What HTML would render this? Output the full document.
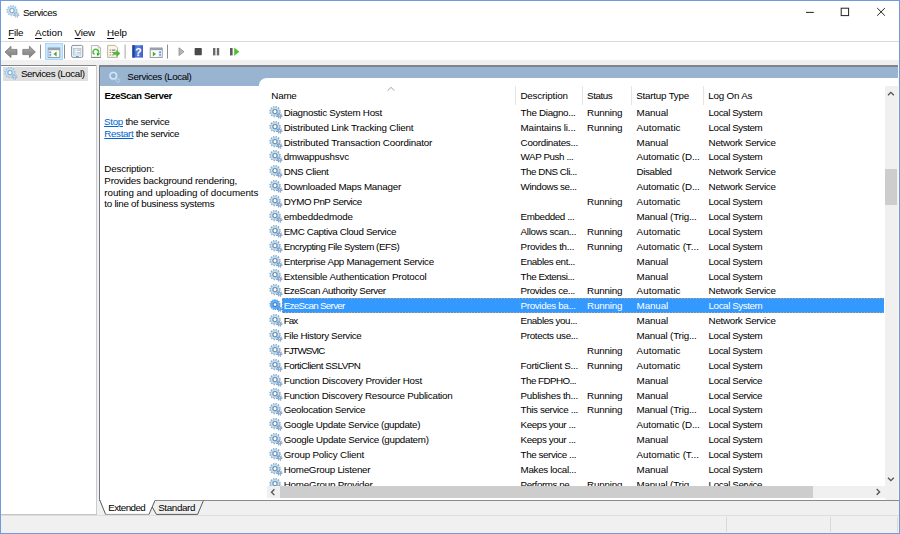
<!DOCTYPE html>
<html><head><meta charset="utf-8"><title>Services</title>
<style>
*{box-sizing:border-box;margin:0;padding:0}
html,body{width:900px;height:534px;overflow:hidden}
body{position:relative;background:#f0f0f0;font-family:"Liberation Sans",sans-serif;font-size:9.8px;color:#000;}
.abs{position:absolute}
#frame{position:absolute;left:0;top:0;width:900px;height:534px;border:1px solid #6f9bdc;z-index:50;pointer-events:none}
#top{position:absolute;left:1px;top:1px;width:898px;height:58.5px;background:#fff}
#msep{position:absolute;left:1px;top:40.6px;width:898px;height:1.3px;background:#d9d9de}
.t{position:absolute;white-space:nowrap;line-height:14px;height:14px}
.u{text-decoration:underline;text-underline-offset:1.5px}
#tree{position:absolute;left:1px;top:65px;width:95.6px;height:449.6px;background:#fff;}
.topline{position:absolute;height:1.5px;background:#80858b}
#treesel{position:absolute;left:3.1px;top:66.9px;width:84.6px;height:13.9px;background:#dfdfdf}
#main{position:absolute;left:99.1px;top:65.1px;width:799.9px;height:435.8px;background:#fff;border-left:1.5px solid #73777f;border-bottom:1.2px solid #8a8a8c}
#cap{position:absolute;left:100.4px;top:65.5px;width:797.2px;height:20.2px;background:#99b4d1}
#listbg{position:absolute;left:258.6px;top:78.2px;width:639.2px;height:421.4px;background:#fff;border-top-left-radius:8px 7px}
.hd{position:absolute;top:89.2px}
.vs{position:absolute;top:86px;width:1px;height:18.5px;background:#e5e5e5}
.row{position:absolute;left:262px;width:622px;height:14.9px;}
.row.sel::before{content:"";position:absolute;left:20.1px;top:-0.1px;right:0;height:14.9px;background:linear-gradient(90deg,#dca266 50%,transparent 50%) 0 0/3px 1px repeat-x,linear-gradient(90deg,#dca266 50%,transparent 50%) 0 100%/3px 1px repeat-x,linear-gradient(180deg,#dca266 50%,transparent 50%) 0 0/1px 3px repeat-y,#3399ff}
.row.sel .c{color:#fff}
.gi{position:absolute;left:6px;top:0.2px;width:14px;height:14px;overflow:visible}
.c{position:absolute;top:1.3px;white-space:nowrap;line-height:14px;height:14px}
.c1{left:21.7px}.c2{left:258.6px}.c3{left:325px}.c4{left:374.6px}.c5{left:446.6px}
#vscroll{position:absolute;left:885.1px;top:86px;width:12.5px;height:413.7px;background:#f0f0f0}
#vthumb{position:absolute;left:885.1px;top:169.2px;width:12.2px;height:36px;background:#cdcdcd}
#hscroll{position:absolute;left:266.8px;top:486px;width:618.4px;height:12px;background:#f0f0f0}
#hthumb{position:absolute;left:280px;top:486.2px;width:533px;height:11.8px;background:#cdcdcd}
#clip{position:absolute;left:0;top:0;width:900px;height:486px;overflow:hidden}
.link{color:#0066cc;text-decoration:underline;text-underline-offset:1px}
.sb{position:absolute;top:517.4px;width:1px;height:15px;background:#d9d9d9}
</style></head><body>
<svg width="0" height="0" style="position:absolute">
<defs>
<g id="gear">
 <circle cx="7" cy="6.6" r="4.85" fill="none" stroke="#7f9ec2" stroke-width="1.6" stroke-dasharray="1.25 1.29" />
 <circle cx="7" cy="6.6" r="3.5" fill="none" stroke="#9dc0dd" stroke-width="2.4"/>
 <circle cx="7" cy="6.6" r="3.45" fill="none" stroke="#bde3f5" stroke-width="1.2"/>
 <circle cx="7" cy="6.6" r="2.05" fill="#fff" stroke="#7189a8" stroke-width="1.05"/>
 <circle cx="11.5" cy="10.8" r="2.25" fill="none" stroke="#7395bd" stroke-width="1.3" stroke-dasharray="1.0 0.77"/>
 <circle cx="11.5" cy="10.8" r="1.25" fill="#cfe2f1" stroke="#86a9cf" stroke-width="1.1"/>
</g>
<g id="gearlt">
 <circle cx="7" cy="6.6" r="4.85" fill="none" stroke="#9dbcda" stroke-width="1.6" stroke-dasharray="1.25 1.29" />
 <circle cx="7" cy="6.6" r="3.5" fill="none" stroke="#a9cde8" stroke-width="2.4"/>
 <circle cx="7" cy="6.6" r="3.45" fill="none" stroke="#c1e5f6" stroke-width="1.2"/>
 <circle cx="7" cy="6.6" r="2.05" fill="#fff" stroke="#8da6c2" stroke-width="1.05"/>
 <circle cx="11.5" cy="10.8" r="2.25" fill="none" stroke="#93b3d4" stroke-width="1.3" stroke-dasharray="1.0 0.77"/>
 <circle cx="11.5" cy="10.8" r="1.25" fill="#d7e8f4" stroke="#a1c0de" stroke-width="1.1"/>
</g>
<g id="gearsel">
 <circle cx="7" cy="6.6" r="4.75" fill="none" stroke="#3f8be0" stroke-width="1.5" stroke-dasharray="1.05 1.08" />
 <circle cx="7" cy="6.6" r="3.45" fill="none" stroke="#62b1f6" stroke-width="2.3"/>
 <circle cx="7" cy="6.6" r="4.4" fill="none" stroke="#4a98ea" stroke-width="0.5"/>
 <circle cx="7" cy="6.6" r="2.0" fill="#fff" stroke="#3a80d2" stroke-width="1.15"/>
 <circle cx="11.5" cy="10.9" r="2.2" fill="none" stroke="#3a82d6" stroke-width="1.2" stroke-dasharray="0.95 0.78"/>
 <circle cx="11.5" cy="10.9" r="1.3" fill="#8cc4f7" stroke="#4e9cec" stroke-width="1.1"/>
</g>
</defs></svg>
<div id="top"></div><div id="msep"></div>

<!-- title bar -->
<svg class="abs" style="left:5.4px;top:3.9px;width:15px;height:15px;overflow:visible"><use href="#gearlt"/></svg>
<div id="a1" class="t" style="left:22.9px;top:6px;font-size:9.8px;letter-spacing:-0.485px">Services</div>
<svg class="abs" style="left:800px;top:4px;width:92px;height:16px" viewBox="0 0 92 16">
 <path d="M6 8.4H13.8" stroke="#222" stroke-width="1" fill="none"/>
 <rect x="41.2" y="4.2" width="7.4" height="7.4" stroke="#222" stroke-width="1" fill="none"/>
 <path d="M77.2 4L84.9 11.7M84.9 4L77.2 11.7" stroke="#222" stroke-width="1" fill="none"/>
</svg>
<!-- menu -->
<div id="a2" class="t" style="left:8.3px;top:26.1px;letter-spacing:-0.249px"><span class="u">F</span>ile</div>
<div id="a3" class="t" style="left:35.1px;top:26.1px;letter-spacing:0.025px"><span class="u">A</span>ction</div>
<div id="a4" class="t" style="left:74.6px;top:26.1px;letter-spacing:-0.166px"><span class="u">V</span>iew</div>
<div id="a5" class="t" style="left:107.1px;top:26.1px;letter-spacing:-0.064px"><span class="u">H</span>elp</div>
<!-- toolbar -->
<svg class="abs" style="left:0;top:42px;width:260px;height:18px" viewBox="0 42 260 18">
 <defs>
  <linearGradient id="ga" x1="0" y1="0" x2="0" y2="1"><stop offset="0" stop-color="#a9a9a9"/><stop offset="1" stop-color="#7d7d7d"/></linearGradient>
  <linearGradient id="gb" x1="0" y1="0" x2="1" y2="0"><stop offset="0" stop-color="#2a4bb0"/><stop offset="0.5" stop-color="#5b86e6"/><stop offset="1" stop-color="#3a5fc8"/></linearGradient>
 </defs>
 <!-- back / forward -->
 <path d="M5 52 L11 46.2 V49.4 H17 V54.6 H11 V57.6 Z" fill="url(#ga)" stroke="#6e6e6e" stroke-width="0.7"/>
 <path d="M35.4 52 L29.4 46.2 V49.4 H22.8 V54.6 H29.4 V57.6 Z" fill="url(#ga)" stroke="#6e6e6e" stroke-width="0.7"/>
 <rect x="40" y="44.6" width="1" height="14" fill="#8d8d8d"/>
 <!-- selected button -->
 <rect x="45.4" y="43.4" width="17.2" height="16" fill="#cce8ff" stroke="#99d1ff" stroke-width="0.8"/>
 <rect x="48.2" y="48" width="11.6" height="9.4" fill="#fff" stroke="#8c919a" stroke-width="0.9"/>
 <rect x="48.2" y="48" width="11.6" height="2.2" fill="#9aa0ab"/>
 <rect x="48.6" y="50.4" width="3.2" height="6.6" fill="#dbe6f5"/>
 <rect x="49.4" y="51.6" width="1.6" height="1.4" fill="#5b8fd8"/><rect x="49.4" y="54.2" width="1.6" height="1.4" fill="#5b8fd8"/>
 <path d="M53.4 54 L56.6 51.6 V56.4 Z" fill="#43b02a"/>
 <rect x="64" y="44.6" width="1" height="14" fill="#8d8d8d"/>
 <!-- properties -->
 <rect x="71.6" y="45.4" width="11.2" height="12" rx="1.4" fill="#f4f7fb" stroke="#8c919a" stroke-width="1"/>
 <rect x="73.6" y="48.6" width="7.2" height="6.4" fill="#fff" stroke="#aeb6c4" stroke-width="0.7"/>
 <rect x="73.8" y="49" width="2" height="5.6" fill="#bfe3f7"/>
 <rect x="76.6" y="49.6" width="3.6" height="1" fill="#9aa3b3"/><rect x="76.6" y="52.4" width="3.6" height="1" fill="#9aa3b3"/>
 <rect x="76" y="56" width="2.6" height="1.2" fill="#39a8e8"/>
 <!-- refresh -->
 <path d="M91.4 45.6 H98.2 L100.6 48 V57.3 H91.4 Z" fill="#fdfdfd" stroke="#a3a3a3" stroke-width="0.8"/>
 <path d="M98.2 45.6 V48 H100.6" fill="none" stroke="#a8a8a8" stroke-width="0.6"/>
 <path d="M91.2 57.5 H100.8" stroke="#7a7a7a" stroke-width="0.8"/>
 <path d="M94.6 54.3 A2.65 2.65 0 1 1 98.2 53.0" fill="none" stroke="#4fc038" stroke-width="1.5"/>
 <path d="M96.6 53.0 L100.2 53.4 L97.6 56.2 Z" fill="#22ad1c"/>
 <!-- export -->
 <path d="M107.6 45.4 H115.2 L117.6 47.8 V57.4 H107.6 Z" fill="#fbf6dd" stroke="#a9a595" stroke-width="0.8"/>
 <rect x="109.6" y="49.6" width="1.6" height="1" fill="#7a7f99"/><rect x="112" y="49.6" width="3.4" height="1" fill="#5c6499"/>
 <rect x="109.6" y="52" width="1.6" height="1" fill="#9a9a9a"/><rect x="112" y="52" width="2.4" height="1" fill="#9a9a9a"/>
 <rect x="109.6" y="54.4" width="1.6" height="1" fill="#9a9a9a"/><rect x="112" y="54.4" width="2" height="1" fill="#9a9a9a"/>
 <path d="M113.6 52.2 H116.6 V50.4 L120 53.4 L116.6 56.4 V54.6 H113.6 Z" fill="#45b82f" stroke="#3a9c27" stroke-width="0.4"/>
 <rect x="124.6" y="44.6" width="1" height="14" fill="#a5a5a5"/>
 <!-- help -->
 <rect x="132.4" y="45.2" width="10.6" height="12.4" fill="url(#gb)"/>
 <rect x="132.4" y="45.2" width="2" height="12.4" fill="#23409c"/>
 <text x="138.3" y="55.6" font-family="Liberation Sans, sans-serif" font-weight="bold" font-size="11" fill="#fff" text-anchor="middle">?</text>
 <!-- window icon -->
 <rect x="150.2" y="48" width="12" height="9.4" fill="#fff" stroke="#8c919a" stroke-width="0.9"/>
 <rect x="150.2" y="48" width="12" height="2.2" fill="#9aa0ab"/>
 <rect x="158.4" y="50.4" width="3.4" height="6.6" fill="#dbe6f5"/>
 <rect x="159.2" y="51.6" width="1.8" height="1.4" fill="#5b8fd8"/><rect x="159.2" y="54.2" width="1.8" height="1.4" fill="#5b8fd8"/>
 <path d="M156 54 L152.8 51.6 V56.4 Z" fill="#43b02a"/>
 <rect x="167" y="44.6" width="1" height="14" fill="#8d8d8d"/>
 <!-- play stop pause resume -->
 <path d="M179 47.8 L184 51.7 L179 55.6 Z" fill="#b8b8b8" stroke="#8a8a8a" stroke-width="0.8"/>
 <rect x="194.6" y="48" width="7.2" height="7.2" rx="0.8" fill="#4a4a4a"/>
 <rect x="213" y="48" width="2.4" height="7.4" fill="#6a6a6a"/><rect x="216.8" y="48" width="2.4" height="7.4" fill="#6a6a6a"/>
 <rect x="230" y="48" width="2.6" height="7.4" fill="#5a5a5a"/>
 <path d="M234.2 47.6 L239.4 51.7 L234.2 55.8 Z" fill="#4ec22f"/>
</svg>
<!-- tree pane -->
<div id="tree"></div>
<div class="topline" style="left:1px;top:64.8px;width:95.6px;height:1.3px"></div>
<div class="abs" style="left:95.5px;top:65px;width:1.3px;height:450px;background:#cbcbcb"></div>
<div class="abs" style="left:1px;top:514.1px;width:95.8px;height:1.1px;background:#c4c4c4"></div>
<div id="treesel"></div>
<svg class="abs" style="left:3px;top:66px;width:15px;height:15px;overflow:visible"><use href="#gearlt"/></svg>
<div id="a6" class="t" style="left:20.9px;top:66.9px;letter-spacing:-0.415px">Services (Local)</div>
<!-- main pane -->
<div id="main"></div>
<div id="cap"></div>
<div class="topline" style="left:99.1px;top:65.1px;width:798.7px"></div>
<div id="listbg"></div>
<div class="abs" style="left:897.6px;top:66.6px;width:1.4px;height:433px;background:#f7f7f7"></div>
<svg class="abs" style="left:106px;top:68px;width:16px;height:16px;overflow:visible" viewBox="106 68 16 16">
 <circle cx="113.3" cy="75.7" r="4.1" fill="none" stroke="#b3cde6" stroke-width="0.9" stroke-dasharray="0.9 0.94"/>
 <circle cx="113.3" cy="75.7" r="3.2" fill="#93afce" stroke="#cde7f6" stroke-width="1.5"/>
 <circle cx="118" cy="80.4" r="1.7" fill="none" stroke="#b9d4ea" stroke-width="0.9"/>
 <circle cx="118" cy="80.4" r="2.3" fill="none" stroke="#abc6e0" stroke-width="0.6" stroke-dasharray="0.7 0.75"/>
</svg>
<div id="a7" class="t" style="left:127.3px;top:70.1px;letter-spacing:-0.377px">Services (Local)</div>
<!-- extended info -->
<div id="a8" class="t" style="left:104.4px;top:89.4px;font-weight:bold;font-size:9.8px;letter-spacing:-0.431px">EzeScan Server</div>
<div id="a9" class="t" style="left:104.1px;top:115px;letter-spacing:-0.310px"><span class="link">Stop</span> the service</div>
<div id="a10" class="t" style="left:104.3px;top:126.6px;letter-spacing:-0.362px"><span class="link">Restart</span> the service</div>
<div id="a11" class="t" style="left:104.3px;top:162px;letter-spacing:-0.170px">Description:</div>
<div id="a12" class="t" style="left:104.3px;top:174px;letter-spacing:-0.202px">Provides background rendering,</div>
<div id="a13" class="t" style="left:104.3px;top:185.6px;letter-spacing:-0.052px">routing and uploading of documents</div>
<div id="a14" class="t" style="left:104.3px;top:197.4px;letter-spacing:-0.258px">to line of business systems</div>
<!-- list header -->
<div id="a15" class="t hd" style="left:271.3px;letter-spacing:-0.210px">Name</div>
<div id="a16" class="t hd" style="left:520.4px;letter-spacing:-0.147px">Description</div>
<div id="a17" class="t hd" style="left:587.1px;letter-spacing:-0.430px">Status</div>
<div id="a18" class="t hd" style="left:636.3px;letter-spacing:-0.223px">Startup Type</div>
<div id="a19" class="t hd" style="left:708.3px;letter-spacing:-0.196px">Log On As</div>
<div class="vs" style="left:515px"></div><div class="vs" style="left:581.6px"></div><div class="vs" style="left:631.2px"></div><div class="vs" style="left:703px"></div>
<svg class="abs" style="left:386px;top:86px;width:10px;height:6px" viewBox="0 0 10 6"><path d="M1.6 4.6 L5 1.4 L8.4 4.6" fill="none" stroke="#9a9a9a" stroke-width="0.9"/></svg>
<div id="clip">

<div class="row" style="top:104.56px"><svg class="gi"><use href="#gear"/></svg><span class="c c1" style="letter-spacing:-0.261px">Diagnostic System Host</span><span class="c c2" style="letter-spacing:-0.298px">The Diagno...</span><span class="c c3" style="letter-spacing:-0.164px">Running</span><span class="c c4" style="letter-spacing:-0.115px">Manual</span><span class="c c5" style="letter-spacing:-0.422px">Local System</span></div>
<div class="row" style="top:119.44px"><svg class="gi"><use href="#gear"/></svg><span class="c c1" style="letter-spacing:-0.169px">Distributed Link Tracking Client</span><span class="c c2" style="letter-spacing:-0.148px">Maintains li...</span><span class="c c3" style="letter-spacing:-0.164px">Running</span><span class="c c4" style="letter-spacing:0.043px">Automatic</span><span class="c c5" style="letter-spacing:-0.422px">Local System</span></div>
<div class="row" style="top:134.32px"><svg class="gi"><use href="#gear"/></svg><span class="c c1" style="letter-spacing:-0.159px">Distributed Transaction Coordinator</span><span class="c c2" style="letter-spacing:-0.268px">Coordinates...</span><span class="c c3"></span><span class="c c4" style="letter-spacing:-0.115px">Manual</span><span class="c c5" style="letter-spacing:-0.292px">Network Service</span></div>
<div class="row" style="top:149.20px"><svg class="gi"><use href="#gear"/></svg><span class="c c1" style="letter-spacing:-0.198px">dmwappushsvc</span><span class="c c2" style="letter-spacing:-0.414px">WAP Push ...</span><span class="c c3"></span><span class="c c4" style="letter-spacing:-0.110px">Automatic (D...</span><span class="c c5" style="letter-spacing:-0.422px">Local System</span></div>
<div class="row" style="top:164.08px"><svg class="gi"><use href="#gear"/></svg><span class="c c1" style="letter-spacing:-0.372px">DNS Client</span><span class="c c2" style="letter-spacing:-0.469px">The DNS Cli...</span><span class="c c3"></span><span class="c c4" style="letter-spacing:-0.384px">Disabled</span><span class="c c5" style="letter-spacing:-0.292px">Network Service</span></div>
<div class="row" style="top:178.96px"><svg class="gi"><use href="#gear"/></svg><span class="c c1" style="letter-spacing:-0.226px">Downloaded Maps Manager</span><span class="c c2" style="letter-spacing:-0.380px">Windows se...</span><span class="c c3"></span><span class="c c4" style="letter-spacing:-0.110px">Automatic (D...</span><span class="c c5" style="letter-spacing:-0.292px">Network Service</span></div>
<div class="row" style="top:193.84px"><svg class="gi"><use href="#gear"/></svg><span class="c c1" style="letter-spacing:-0.493px">DYMO PnP Service</span><span class="c c2"></span><span class="c c3" style="letter-spacing:-0.164px">Running</span><span class="c c4" style="letter-spacing:0.043px">Automatic</span><span class="c c5" style="letter-spacing:-0.422px">Local System</span></div>
<div class="row" style="top:208.72px"><svg class="gi"><use href="#gear"/></svg><span class="c c1" style="letter-spacing:-0.130px">embeddedmode</span><span class="c c2" style="letter-spacing:-0.386px">Embedded ...</span><span class="c c3"></span><span class="c c4" style="letter-spacing:-0.190px">Manual (Trig...</span><span class="c c5" style="letter-spacing:-0.422px">Local System</span></div>
<div class="row" style="top:223.60px"><svg class="gi"><use href="#gear"/></svg><span class="c c1" style="letter-spacing:-0.363px">EMC Captiva Cloud Service</span><span class="c c2" style="letter-spacing:-0.318px">Allows scan...</span><span class="c c3" style="letter-spacing:-0.164px">Running</span><span class="c c4" style="letter-spacing:0.043px">Automatic</span><span class="c c5" style="letter-spacing:-0.422px">Local System</span></div>
<div class="row" style="top:238.48px"><svg class="gi"><use href="#gear"/></svg><span class="c c1" style="letter-spacing:-0.455px">Encrypting File System (EFS)</span><span class="c c2" style="letter-spacing:-0.253px">Provides th...</span><span class="c c3" style="letter-spacing:-0.164px">Running</span><span class="c c4" style="letter-spacing:-0.024px">Automatic (T...</span><span class="c c5" style="letter-spacing:-0.422px">Local System</span></div>
<div class="row" style="top:253.36px"><svg class="gi"><use href="#gear"/></svg><span class="c c1" style="letter-spacing:-0.285px">Enterprise App Management Service</span><span class="c c2" style="letter-spacing:-0.398px">Enables ent...</span><span class="c c3"></span><span class="c c4" style="letter-spacing:-0.115px">Manual</span><span class="c c5" style="letter-spacing:-0.422px">Local System</span></div>
<div class="row" style="top:268.24px"><svg class="gi"><use href="#gear"/></svg><span class="c c1" style="letter-spacing:-0.153px">Extensible Authentication Protocol</span><span class="c c2" style="letter-spacing:-0.447px">The Extensi...</span><span class="c c3"></span><span class="c c4" style="letter-spacing:-0.115px">Manual</span><span class="c c5" style="letter-spacing:-0.422px">Local System</span></div>
<div class="row" style="top:283.12px"><svg class="gi"><use href="#gear"/></svg><span class="c c1" style="letter-spacing:-0.400px">EzeScan Authority Server</span><span class="c c2" style="letter-spacing:-0.358px">Provides ce...</span><span class="c c3" style="letter-spacing:-0.164px">Running</span><span class="c c4" style="letter-spacing:0.043px">Automatic</span><span class="c c5" style="letter-spacing:-0.292px">Network Service</span></div>
<div class="row sel" style="top:298.00px"><svg class="gi"><use href="#gearsel"/></svg><span class="c c1" style="letter-spacing:-0.703px">EzeScan Server</span><span class="c c2" style="letter-spacing:-0.354px">Provides ba...</span><span class="c c3" style="letter-spacing:-0.164px">Running</span><span class="c c4" style="letter-spacing:-0.115px">Manual</span><span class="c c5" style="letter-spacing:-0.422px">Local System</span></div>
<div class="row" style="top:312.88px"><svg class="gi"><use href="#gear"/></svg><span class="c c1" style="letter-spacing:-0.931px">Fax</span><span class="c c2" style="letter-spacing:-0.396px">Enables you...</span><span class="c c3"></span><span class="c c4" style="letter-spacing:-0.115px">Manual</span><span class="c c5" style="letter-spacing:-0.292px">Network Service</span></div>
<div class="row" style="top:327.76px"><svg class="gi"><use href="#gear"/></svg><span class="c c1" style="letter-spacing:-0.332px">File History Service</span><span class="c c2" style="letter-spacing:-0.358px">Protects use...</span><span class="c c3"></span><span class="c c4" style="letter-spacing:-0.190px">Manual (Trig...</span><span class="c c5" style="letter-spacing:-0.422px">Local System</span></div>
<div class="row" style="top:342.64px"><svg class="gi"><use href="#gear"/></svg><span class="c c1" style="letter-spacing:-1.042px">FJTWSVIC</span><span class="c c2"></span><span class="c c3" style="letter-spacing:-0.164px">Running</span><span class="c c4" style="letter-spacing:0.043px">Automatic</span><span class="c c5" style="letter-spacing:-0.422px">Local System</span></div>
<div class="row" style="top:357.52px"><svg class="gi"><use href="#gear"/></svg><span class="c c1" style="letter-spacing:-0.480px">FortiClient SSLVPN</span><span class="c c2" style="letter-spacing:-0.302px">FortiClient S...</span><span class="c c3" style="letter-spacing:-0.164px">Running</span><span class="c c4" style="letter-spacing:0.043px">Automatic</span><span class="c c5" style="letter-spacing:-0.422px">Local System</span></div>
<div class="row" style="top:372.40px"><svg class="gi"><use href="#gear"/></svg><span class="c c1" style="letter-spacing:-0.223px">Function Discovery Provider Host</span><span class="c c2" style="letter-spacing:-0.551px">The FDPHO...</span><span class="c c3"></span><span class="c c4" style="letter-spacing:-0.115px">Manual</span><span class="c c5" style="letter-spacing:-0.412px">Local Service</span></div>
<div class="row" style="top:387.28px"><svg class="gi"><use href="#gear"/></svg><span class="c c1" style="letter-spacing:-0.253px">Function Discovery Resource Publication</span><span class="c c2" style="letter-spacing:-0.286px">Publishes th...</span><span class="c c3" style="letter-spacing:-0.164px">Running</span><span class="c c4" style="letter-spacing:-0.115px">Manual</span><span class="c c5" style="letter-spacing:-0.412px">Local Service</span></div>
<div class="row" style="top:402.16px"><svg class="gi"><use href="#gear"/></svg><span class="c c1" style="letter-spacing:-0.323px">Geolocation Service</span><span class="c c2" style="letter-spacing:-0.369px">This service ...</span><span class="c c3" style="letter-spacing:-0.164px">Running</span><span class="c c4" style="letter-spacing:-0.190px">Manual (Trig...</span><span class="c c5" style="letter-spacing:-0.422px">Local System</span></div>
<div class="row" style="top:417.04px"><svg class="gi"><use href="#gear"/></svg><span class="c c1" style="letter-spacing:-0.307px">Google Update Service (gupdate)</span><span class="c c2" style="letter-spacing:-0.393px">Keeps your ...</span><span class="c c3"></span><span class="c c4" style="letter-spacing:-0.110px">Automatic (D...</span><span class="c c5" style="letter-spacing:-0.422px">Local System</span></div>
<div class="row" style="top:431.92px"><svg class="gi"><use href="#gear"/></svg><span class="c c1" style="letter-spacing:-0.287px">Google Update Service (gupdatem)</span><span class="c c2" style="letter-spacing:-0.393px">Keeps your ...</span><span class="c c3"></span><span class="c c4" style="letter-spacing:-0.115px">Manual</span><span class="c c5" style="letter-spacing:-0.422px">Local System</span></div>
<div class="row" style="top:446.80px"><svg class="gi"><use href="#gear"/></svg><span class="c c1" style="letter-spacing:-0.190px">Group Policy Client</span><span class="c c2" style="letter-spacing:-0.405px">The service ...</span><span class="c c3"></span><span class="c c4" style="letter-spacing:-0.024px">Automatic (T...</span><span class="c c5" style="letter-spacing:-0.422px">Local System</span></div>
<div class="row" style="top:461.68px"><svg class="gi"><use href="#gear"/></svg><span class="c c1" style="letter-spacing:-0.238px">HomeGroup Listener</span><span class="c c2" style="letter-spacing:-0.318px">Makes local...</span><span class="c c3"></span><span class="c c4" style="letter-spacing:-0.115px">Manual</span><span class="c c5" style="letter-spacing:-0.422px">Local System</span></div>
<div class="row" style="top:476.56px"><svg class="gi"><use href="#gear"/></svg><span class="c c1" style="letter-spacing:-0.207px">HomeGroup Provider</span><span class="c c2" style="letter-spacing:-0.413px">Performs ne...</span><span class="c c3" style="letter-spacing:-0.164px">Running</span><span class="c c4" style="letter-spacing:-0.190px">Manual (Trig...</span><span class="c c5" style="letter-spacing:-0.412px">Local Service</span></div>
</div>
<!-- scrollbars -->
<div id="vscroll"></div><div id="vthumb"></div>
<div id="hscroll"></div><div id="hthumb"></div>
<svg class="abs" style="left:884px;top:86px;width:14px;height:412px" viewBox="884 86 14 412">
 <path d="M888 95.2 L890.9 92.3 L893.8 95.2" fill="none" stroke="#505050" stroke-width="1.3"/>
 <path d="M888 477.8 L890.9 480.7 L893.8 477.8" fill="none" stroke="#505050" stroke-width="1.3"/>
</svg>
<svg class="abs" style="left:262px;top:485px;width:623px;height:14px" viewBox="262 485 623 14">
 <path d="M274.4 489.3 L271.5 492.2 L274.4 495.1" fill="none" stroke="#505050" stroke-width="1.3"/>
 <path d="M876.7 489 L879.6 491.9 L876.7 494.8" fill="none" stroke="#505050" stroke-width="1.3"/>
</svg>
<!-- tabs -->
<svg class="abs" style="left:96px;top:497px;width:120px;height:20px" viewBox="96 497 120 20">
 <path d="M99.4 499 L105.6 514.4 H149 L155 500.6 L155 499 Z" fill="#fff"/>
 <path d="M105.6 514.4 H149" fill="none" stroke="#9c9c9c" stroke-width="1"/>
 <path d="M99.6 499.6 L105.6 514.4 M149 514.4 L155 500.4" fill="none" stroke="#5a5a5a" stroke-width="1"/>
 <path d="M152.2 507 L156.4 514.4 H197.6 L203.4 500.6" fill="none" stroke="#5a5a5a" stroke-width="1"/>
</svg>
<div id="b1" class="t" style="left:108.2px;top:501.3px;letter-spacing:-0.538px">Extended</div>
<div id="b2" class="t" style="left:158.2px;top:501.3px;letter-spacing:-0.358px">Standard</div>
<!-- status bar -->
<div class="abs" style="left:1px;top:515px;width:898px;height:1px;background:#dedede"></div>
<div class="sb" style="left:726.4px"></div><div class="sb" style="left:830px"></div><div class="sb" style="left:896.9px"></div>
<div id="frame"></div>
</body></html>
